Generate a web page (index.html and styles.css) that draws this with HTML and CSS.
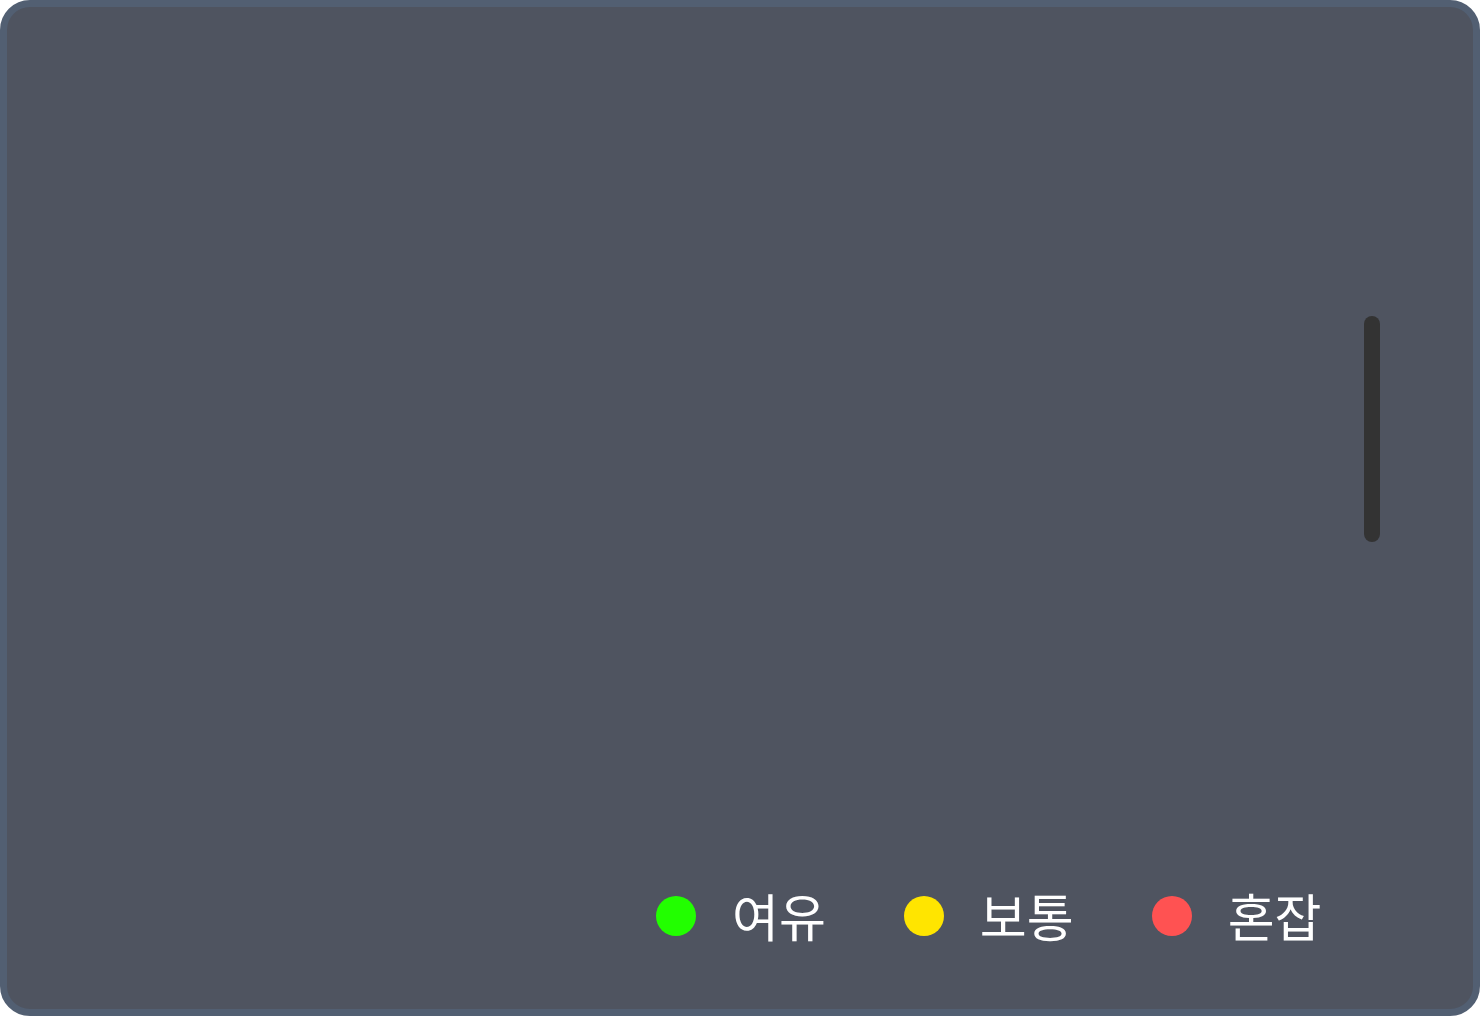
FILE: index.html
```html
<!DOCTYPE html>
<html lang="ko">
<head>
<meta charset="utf-8">
<link rel="stylesheet" href="styles.css">
</head>
<body>
<div class="card">
  <div class="map">
    <div class="thumb"></div>
  </div>
  <div class="legend">
    <div class="item"><span class="dot green"></span><span class="label">여유</span></div>
    <div class="item"><span class="dot yellow"></span><span class="label">보통</span></div>
    <div class="item"><span class="dot red"></span><span class="label">혼잡</span></div>
  </div>
</div>
</body>
</html>
```
FILE: styles.css
```css
html, body {
  margin: 0;
  padding: 0;
  background: #ffffff;
}
.card {
  box-sizing: border-box;
  width: 1480px;
  height: 1016px;
  border: 7px solid #525f72;
  border-radius: 30px;
  background: #4f5460;
  display: flex;
  flex-direction: column;
  overflow: hidden;
}
.map {
  flex: 1;
  display: flex;
  justify-content: flex-end;
  align-items: flex-start;
  padding: 309px 93px 0 0;
}
.thumb {
  width: 16px;
  height: 226px;
  border-radius: 8px;
  background: #333333;
}
.legend {
  display: flex;
  justify-content: flex-start;
  align-items: center;
  gap: 78px;
  height: 56px;
  padding: 0 0 65px 649px;
}
.item {
  display: flex;
  align-items: center;
  gap: 36px;
}
.dot {
  width: 40px;
  height: 40px;
  border-radius: 50%;
}
.green { background: #22ff00; }
.yellow { background: #ffe500; }
.red { background: #ff5252; }
.label {
  font-family: "Noto Sans CJK KR", sans-serif;
  font-size: 51px;
  line-height: 56px;
  color: #ffffff;
  position: relative;
  top: -1px;
}
```
